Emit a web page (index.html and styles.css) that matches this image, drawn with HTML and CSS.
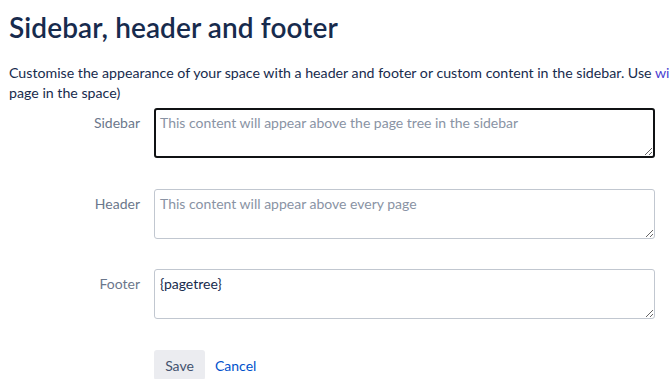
FILE: index.html
```html
<!DOCTYPE html>
<html>
<head>
<meta charset="utf-8">
<link rel="stylesheet" href="styles.css">
</head>
<body>
<div class="page">
  <h1 class="title">Sidebar, header and footer</h1>
  <p class="intro">Customise the appearance of your space with a header and footer or custom content in the sidebar. Use <a class="link" href="#">wiki markup</a> to add content (for example, a page tree of every<br>page in the space)</p>
  <form class="form">
    <div class="row row-first">
      <label class="label">Sidebar</label>
      <textarea class="field focused" placeholder="This content will appear above the page tree in the sidebar"></textarea>
    </div>
    <div class="row">
      <label class="label">Header</label>
      <textarea class="field" placeholder="This content will appear above every page"></textarea>
    </div>
    <div class="row">
      <label class="label">Footer</label>
      <textarea class="field">{pagetree}</textarea>
    </div>
    <div class="actions">
      <button type="button" class="btn">Save</button>
      <a class="cancel" href="#">Cancel</a>
    </div>
  </form>
</div>
</body>
</html>
```
FILE: styles.css
```css
html, body {
  margin: 0;
  padding: 0;
  background: #fff;
  overflow: hidden;
}
body {
  font-family: "Lato", "Open Sans", sans-serif;
  color: #172B4D;
  width: 669px;
  height: 379px;
}
.page {
  padding-left: 9px;
  width: 1200px;
}
.title {
  font-size: 28px;
  font-weight: 600;
  line-height: 32px;
  margin: 11px 0 0;
  color: #172B4D;
  letter-spacing: 0.1px;
}
.intro {
  font-size: 14.2px;
  line-height: 20px;
  margin: 20px 0 0;
  white-space: nowrap;
}
.link {
  color: #4C3FD1;
  text-decoration: none;
}
.form {
  margin-top: 5px;
  display: flex;
  flex-direction: column;
  gap: 30px;
}
.row {
  display: flex;
  align-items: flex-start;
}
.row-first {
  margin-bottom: 1px;
}
.label {
  width: 131px;
  margin-right: 14px;
  text-align: right;
  font-size: 14px;
  line-height: 20px;
  padding-top: 5px;
  color: #6B778C;
}
.field {
  box-sizing: border-box;
  width: 501px;
  height: 50px;
  border: 1px solid #C1C7D0;
  border-radius: 3px;
  padding: 4px 5px;
  font-family: inherit;
  font-size: 14px;
  line-height: 20px;
  color: #172B4D;
  background: #fff;
  margin: 0;
}
.field::placeholder {
  color: #8993A4;
}
.field.focused {
  border: 2px solid #101214;
  padding: 3px 4px;
}
.actions {
  display: flex;
  align-items: center;
  padding-left: 145px;
  gap: 10px;
  margin-top: 1px;
}
.btn {
  font-family: inherit;
  font-size: 14px;
  color: #42526E;
  background: #EBECF0;
  border: none;
  border-radius: 3px;
  width: 51px;
  height: 30px;
  padding: 0;
}
.cancel {
  font-size: 14px;
  color: #0052CC;
  text-decoration: none;
}
```
